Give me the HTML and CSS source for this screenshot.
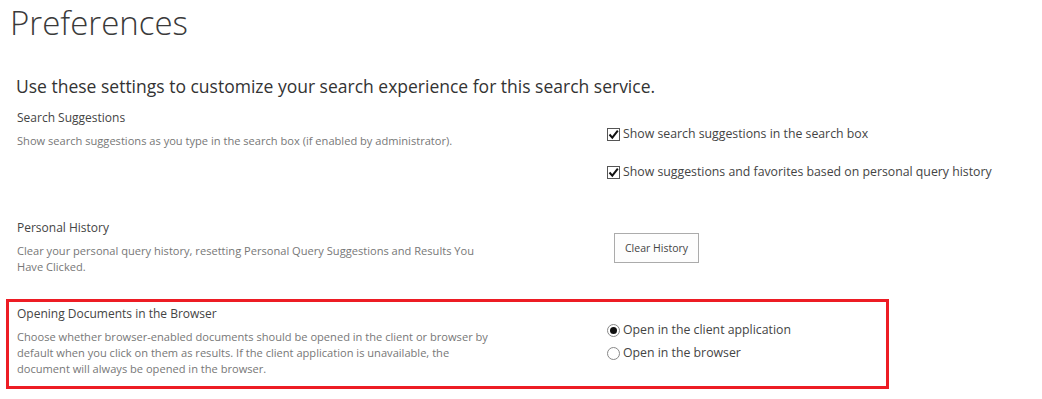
FILE: index.html
```html
<!DOCTYPE html>
<html lang="en">
<head>
    <meta charset="UTF-8">
    <title>Preferences</title>
    <link rel="stylesheet" href="styles.css">
</head>
<body>
    <main class="page">
        <h1 class="page-title">Preferences</h1>
        <p class="intro">Use these settings to customize your search experience for this search service.</p>

        <!-- Search Suggestions -->
        <section class="pref-row">
            <div class="pref-info">
                <h3 class="pref-label">Search Suggestions</h3>
                <p class="pref-desc">Show search suggestions as you type in the search box (if enabled by administrator).</p>
            </div>
            <div class="pref-control">
                <div class="check-item">
                    <span class="check-box"><svg viewBox="0 0 13 13" width="13" height="13"><path d="M2.5 6.5 L5.3 9.6 L10.8 2.6" fill="none" stroke="#111" stroke-width="2"/></svg></span>
                    <span>Show search suggestions in the search box</span>
                </div>
                <div class="check-item">
                    <span class="check-box"><svg viewBox="0 0 13 13" width="13" height="13"><path d="M2.5 6.5 L5.3 9.6 L10.8 2.6" fill="none" stroke="#111" stroke-width="2"/></svg></span>
                    <span>Show suggestions and favorites based on personal query history</span>
                </div>
            </div>
        </section>

        <!-- Personal History -->
        <section class="pref-row">
            <div class="pref-info">
                <h3 class="pref-label">Personal History</h3>
                <p class="pref-desc">Clear your personal query history, resetting Personal Query Suggestions and Results You Have Clicked.</p>
            </div>
            <div class="pref-control">
                <button class="btn" type="button">Clear History</button>
            </div>
        </section>

        <!-- Opening Documents (highlighted) -->
        <section class="pref-row pref-row--marked">
            <div class="pref-info">
                <h3 class="pref-label">Opening Documents in the Browser</h3>
                <p class="pref-desc">Choose whether browser-enabled documents should be opened in the client or browser by default when you click on them as results. If the client application is unavailable, the document will always be opened in the browser.</p>
            </div>
            <div class="pref-control radio-list">
                <div class="radio-item">
                    <span class="radio radio--on"></span>
                    <span>Open in the client application</span>
                </div>
                <div class="radio-item">
                    <span class="radio"></span>
                    <span>Open in the browser</span>
                </div>
            </div>
        </section>
    </main>
</body>
</html>
```

FILE: styles.css
```css
/* Base */
body {
    margin: 0;
    font-family: "Open Sans", "Noto Sans", sans-serif;
    color: #444;
    background: #fff;
}

/* Title + intro */
.page-title {
    margin: 0 0 0 10px;
    font-size: 33px;
    line-height: 45px;
    font-weight: 300;
    color: #3a3a3a;
}

.intro {
    margin: 29px 0 11px 16px;
    font-size: 17.5px;
    line-height: 24px;
    color: #333;
}

/* Setting rows */
.pref-row {
    display: grid;
    grid-template-columns: 590px 1fr;
    margin-left: 17px;
    padding-bottom: 18px;
}

.pref-info {
    max-width: 482px;
}

.pref-label {
    margin: 0;
    font-size: 12px;
    line-height: 18px;
    font-weight: 400;
    color: #444;
}

.pref-desc {
    margin: 6px 0 0 0;
    font-size: 11.1px;
    line-height: 16px;
    color: #777;
}

.pref-control {
    padding-top: 16px;
    font-size: 12.3px;
    line-height: 18px;
    color: #444;
}

/* checkboxes */
.check-item {
    display: flex;
    align-items: center;
    gap: 3px;
    margin-bottom: 20px;
}

.check-box {
    width: 11px;
    height: 11px;
    border: 1px solid #555;
    background: #fff;
    position: relative;
}

.check-box svg {
    position: absolute;
    top: -1px;
    left: -1px;
}

/* button */
.btn {
    margin-top: -2px;
    margin-left: 7px;
    height: 30px;
    padding: 0 10px;
    border: 1px solid #ababab;
    background: #fdfdfd;
    font-family: inherit;
    font-size: 10.5px;
    color: #444;
}

/* highlighted row */
.pref-row--marked {
    margin-left: 6px;
    width: 869px;
    border: 3px solid #ed1c24;
    padding: 3px 0 9px 8px;
    margin-top: 6px;
}

.radio-list {
    display: flex;
    flex-direction: column;
    gap: 5px;
}

.radio-item {
    display: flex;
    align-items: center;
    gap: 3px;
}

.radio {
    width: 11px;
    height: 11px;
    border: 1px solid #888;
    border-radius: 50%;
    background: #fff;
    position: relative;
}

.radio--on::after {
    content: '';
    position: absolute;
    top: 2px;
    left: 2px;
    width: 7px;
    height: 7px;
    border-radius: 50%;
    background: #111;
}
```
